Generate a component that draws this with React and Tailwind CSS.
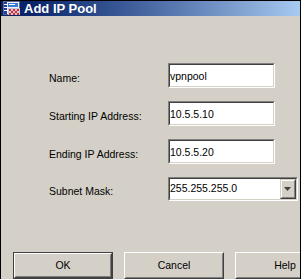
import { useState } from "react";

function Field({ label, value, onChange }) {
  return (
    <div className="flex items-center h-[25px]">
      <div className="w-[119px] pt-[6px] text-black">{label}</div>
      <div className="w-[107px] h-[25px] border border-t-[#808080] border-l-[#808080] border-b-white border-r-white">
        <div className="h-full border border-t-[#404040] border-l-[#404040] border-b-[#d4d0c8] border-r-[#d4d0c8] bg-white">
          <input
            type="text"
            value={value}
            onChange={(e) => onChange(e.target.value)}
            className="w-full h-full bg-white outline-none px-0 text-black"
          />
        </div>
      </div>
    </div>
  );
}

function AppIcon() {
  return (
    <svg width="18" height="15" viewBox="0 0 18 15">
      <rect x="0.5" y="0.5" width="16" height="13" fill="#f4f4f8" stroke="#5a6890" />
      <rect x="1" y="1" width="3" height="12" fill="#1c3ca8" />
      <rect x="1" y="3" width="3" height="1" fill="#ffffff" />
      <rect x="1" y="6" width="3" height="1" fill="#ffffff" />
      <rect x="1" y="9" width="3" height="1" fill="#ffffff" />
      <rect x="5" y="2" width="10" height="4" fill="#3a7ad8" />
      <rect x="6" y="3" width="6" height="1" fill="#ffffff" />
      <rect x="5" y="7" width="12" height="7" fill="#c8c8dc" />
      <rect x="6" y="8" width="2" height="2" fill="#e02828" />
      <rect x="10" y="8" width="2" height="2" fill="#e02828" />
      <rect x="14" y="8" width="2" height="2" fill="#e02828" />
      <rect x="8" y="10" width="2" height="2" fill="#e02828" />
      <rect x="12" y="10" width="2" height="2" fill="#e02828" />
      <rect x="6" y="12" width="2" height="2" fill="#e02828" />
      <rect x="10" y="12" width="2" height="2" fill="#e02828" />
      <rect x="14" y="12" width="2" height="2" fill="#e02828" />
    </svg>
  );
}

function Button({ children, isDefault }) {
  if (isDefault) {
    return (
      <div className="w-[100px] h-[27px] shrink-0 border border-[#404040]">
        <div className="h-full border border-t-white border-l-white border-b-[#404040] border-r-[#404040]">
          <div className="h-full flex items-center justify-center border border-t-[#d4d0c8] border-l-[#d4d0c8] border-b-[#808080] border-r-[#808080]">
            {children}
          </div>
        </div>
      </div>
    );
  }
  return (
    <div className="w-[100px] h-[27px] shrink-0 border border-t-white border-l-white border-b-[#404040] border-r-[#404040]">
      <div className="h-full flex items-center justify-center border border-t-[#d4d0c8] border-l-[#d4d0c8] border-b-[#808080] border-r-[#808080]">
        {children}
      </div>
    </div>
  );
}

export default function App() {
  const [name, setName] = useState("vpnpool");
  const [start, setStart] = useState("10.5.5.10");
  const [end, setEnd] = useState("10.5.5.20");

  return (
    <div
      className="w-[301px] h-[279px] overflow-hidden flex flex-col border-t border-l border-r border-black bg-[#d4d0c8] text-[10.5px]"
      style={{ fontFamily: '"Liberation Sans", Arial, sans-serif' }}
    >
      <div className="h-[15px] shrink-0 flex items-center gap-[3px] pl-[2px] bg-gradient-to-r from-[#0a246a] from-10% via-[#4a6aa4] via-50% to-[#a6caf0]">
        <AppIcon />
        <span className="text-white font-bold text-[13px] leading-none">Add IP Pool</span>
      </div>

      <div className="flex-1 flex flex-col pt-[47px] pl-[48px]">
        <div className="flex flex-col gap-[13px]">
          <Field label="Name:" value={name} onChange={setName} />
          <Field label="Starting IP Address:" value={start} onChange={setStart} />
          <Field label="Ending IP Address:" value={end} onChange={setEnd} />
          <div className="flex items-center h-[24px]">
            <div className="w-[119px] pt-[6px] text-black">Subnet Mask:</div>
            <div className="w-[130px] h-[24px] border border-t-[#808080] border-l-[#808080] border-b-white border-r-white">
              <div className="h-full flex border border-t-[#404040] border-l-[#404040] border-b-[#d4d0c8] border-r-[#d4d0c8] bg-white">
                <div className="flex-1 flex items-center text-black">255.255.255.0</div>
                <div className="w-[16px] h-full border border-t-[#d4d0c8] border-l-[#d4d0c8] border-b-[#404040] border-r-[#404040]">
                  <div className="h-full flex items-center justify-center bg-[#d4d0c8] border border-t-white border-l-white border-b-[#808080] border-r-[#808080]">
                    <svg width="8" height="4" viewBox="0 0 8 4">
                      <path d="M0 0 H7 L3.5 4 Z" fill="#404040" />
                    </svg>
                  </div>
                </div>
              </div>
            </div>
          </div>
        </div>
      </div>

      <div className="flex gap-[11px] pl-[12px] shrink-0 text-black">
        <Button isDefault>OK</Button>
        <Button>Cancel</Button>
        <Button>Help</Button>
      </div>
    </div>
  );
}
